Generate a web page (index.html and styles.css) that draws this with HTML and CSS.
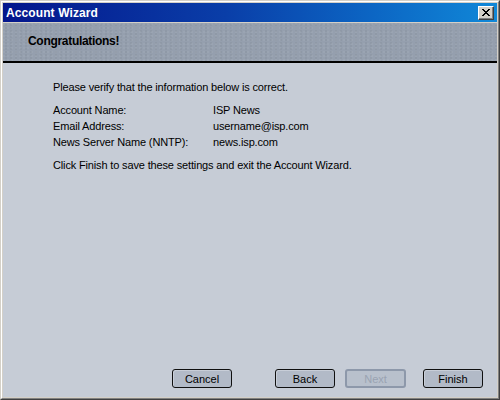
FILE: index.html
```html
<!DOCTYPE html>
<html>
<head>
<meta charset="utf-8">
<link rel="stylesheet" href="styles.css">
</head>
<body>
<div class="window">
  <div class="frame">
    <div class="titlebar">
      <span class="title">Account Wizard</span>
      <button class="close" aria-label="Close">
        <svg width="8" height="7" viewBox="0 0 8 7"><path d="M0 0h2v1h1v1h2v-1h1v-1h2v1h-1v1h-1v1h-1v1h1v1h1v1h1v1h-2v-1h-1v-1h-2v1h-1v1h-2v-1h1v-1h1v-1h1v-1h-1v-1h-1v-1h-1z" fill="#000"/></svg>
      </button>
    </div>
    <div class="header">
      <h1 class="heading">Congratulations!</h1>
    </div>
    <div class="content">
      <p class="line">Please verify that the information below is correct.</p>
      <div class="info">
        <span>Account Name:</span><span>ISP News</span>
        <span>Email Address:</span><span>username@isp.com</span>
        <span>News Server Name (NNTP):</span><span>news.isp.com</span>
      </div>
      <p class="line">Click Finish to save these settings and exit the Account Wizard.</p>
    </div>
    <div class="footer">
      <button class="btn btn-cancel">Cancel</button>
      <button class="btn btn-back">Back</button>
      <button class="btn btn-next" disabled>Next</button>
      <button class="btn btn-finish">Finish</button>
    </div>
  </div>
</div>
</body>
</html>
```
FILE: styles.css
```css
html, body {
  margin: 0;
  padding: 0;
  background: #c6ccd6;
}
.window {
  width: 500px;
  height: 400px;
  box-sizing: border-box;
  border: 1px solid;
  border-color: #d4d0c8 #404040 #404040 #d4d0c8;
}
.frame {
  height: 100%;
  box-sizing: border-box;
  border: 1px solid;
  border-color: #ffffff #808080 #808080 #ffffff;
  padding: 1px;
  background: #d4d0c8;
  display: flex;
  flex-direction: column;
  font-family: "Liberation Sans", Arial, sans-serif;
}
.titlebar {
  height: 19px;
  margin-bottom: 1px;
  background: linear-gradient(90deg, #04168c 0%, #0a3ea8 45%, #0c66c4 75%, #1088d8 100%);
  display: flex;
  align-items: center;
  justify-content: space-between;
  padding: 0 3px 0 3px;
}
.title {
  color: #fff;
  font-weight: bold;
  font-size: 12px;
  letter-spacing: 0.1px;
}
.close {
  width: 16px;
  height: 14px;
  padding: 0;
  margin: 0;
  box-sizing: border-box;
  background: #d4d0c8;
  border: 1px solid;
  border-color: #ffffff #404040 #404040 #ffffff;
  box-shadow: inset -1px -1px 0 #808080;
  display: flex;
  align-items: center;
  justify-content: center;
}
.close svg { display: block; }
.header {
  height: 38px;
  border-bottom: 2px solid #000;
  background-color: #959fae;
  background-image:
    radial-gradient(circle at 1px 1px, rgba(255,255,255,0.05) 1px, transparent 1px),
    radial-gradient(circle at 3px 2px, rgba(0,0,0,0.04) 1px, transparent 1px);
  background-size: 4px 4px, 5px 3px;
  display: flex;
  align-items: center;
  padding-left: 25px;
}
.heading {
  margin: 0 0 2px 0;
  font-size: 12px;
  font-weight: bold;
  color: #000;
  letter-spacing: -0.3px;
}
.content {
  flex: 1;
  background: #c6ccd6;
  padding: 16px 0 0 50px;
  font-size: 11px;
  line-height: 16px;
  color: #000;
  letter-spacing: -0.15px;
}
.line {
  margin: 0;
}
.info {
  display: grid;
  grid-template-columns: 160px auto;
  margin: 7px 0;
}
.footer {
  background: #c6ccd6;
  display: flex;
  padding: 0 0 9px 169px;
}
.btn {
  width: 60px;
  height: 19px;
  box-sizing: border-box;
  padding: 0;
  border: 1px solid #101010;
  border-radius: 3px;
  background: #b2bac7;
  font-family: "Liberation Sans", Arial, sans-serif;
  font-size: 11px;
  color: #000;
  box-shadow: inset 1px 1px 0 #c8ced8;
}
.btn-back { margin-left: 43px; }
.btn-next {
  margin-left: 10px;
  width: 61px;
  border: 2px solid #8d98aa;
  color: #9aa3b2;
  background: #b8c0cc;
  box-shadow: none;
}
.btn-finish { margin-left: 17px; }
```
